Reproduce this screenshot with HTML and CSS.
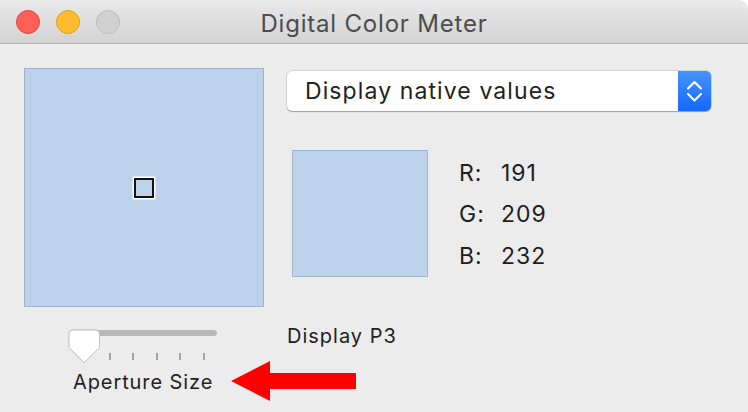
FILE: index.html
```html
<!DOCTYPE HTML>
<html>
  <head>
    <meta http-equiv="Content-Type" content="text/html; charset=utf-8" />
    <link rel="stylesheet" href="styles.css">
  </head>
  <body>
    <div class="window">
      <div class="titlebar">
        <div class="lights">
          <span class="light close"></span>
          <span class="light min"></span>
          <span class="light zoom"></span>
        </div>
        <div class="title">Digital Color Meter</div>
      </div>

      <div class="content">
        <div class="loupe"><span class="aperture"></span></div>

        <div class="right">
          <div class="popup">
            <span class="popup-label">Display native values</span>
            <span class="popup-arrows">
              <svg width="33" height="40" viewBox="0 0 33 40">
                <polyline points="10,17.5 16.5,11 23,17.5" fill="none" stroke="#fff" stroke-width="2.2" stroke-linecap="round" stroke-linejoin="round"/>
                <polyline points="10,23 16.5,29.5 23,23" fill="none" stroke="#fff" stroke-width="2.2" stroke-linecap="round" stroke-linejoin="round"/>
              </svg>
            </span>
          </div>
          <div class="reading">
            <div class="swatch"></div>
            <div class="values">
              <span class="lbl">R:</span><span>191</span>
              <span class="lbl">G:</span><span>209</span>
              <span class="lbl">B:</span><span>232</span>
            </div>
          </div>
        </div>

        <div class="aperture-ctl">
          <div class="slider">
            <div class="track"></div>
            <div class="ticks">
              <span></span><span></span><span></span><span></span><span></span><span></span>
            </div>
            <svg class="knob" width="33" height="35" viewBox="0 0 33 35">
              <path d="M4.5,1 H28 Q31.5,1 31.5,4.5 V18.5 L16.2,33.5 L1,18.5 V4.5 Q1,1 4.5,1 Z" fill="#fff" stroke="#c2c2c2" stroke-width="1"/>
            </svg>
          </div>
          <div class="ctl-label">Aperture Size</div>
        </div>

        <div class="profile">Display P3</div>
      </div>

      <svg class="arrow" width="132" height="46" viewBox="0 0 132 46">
        <polygon points="3,23 42,3 42,15 128,15 128,31 42,31 42,43" fill="#ff0000"/>
      </svg>
    </div>
  </body>
</html>
```

FILE: styles.css
```css
body      { margin: 0; background: #fff; font-family: Inter, "Liberation Sans", Arial, sans-serif; }
.window   { position: relative; width: 748px; height: 412px; background: #ececec; border-radius: 0 10px 0 0; overflow: hidden; }

.titlebar { position: relative; height: 43px; border-bottom: 1px solid #b3b3b3; background: linear-gradient(#e9e9e9, #d3d3d3); display: flex; align-items: center; justify-content: center; }
.lights   { position: absolute; left: 16px; top: 10px; display: flex; gap: 16px; }
.light    { width: 22px; height: 22px; border-radius: 50%; border: 1px solid; }
.close    { background: #fe5f57; border-color: #e1463f; }
.min      { background: #febc2e; border-color: #de9f22; }
.zoom     { background: #d1d1d1; border-color: #bcbcbc; }
.title    { font-size: 24px; color: #4c4c4c; padding-top: 3px; letter-spacing: 0.8px; }

.content  { display: grid; grid-template-columns: 240px 424px; column-gap: 23px; padding: 24px 0 0 24px; }

.loupe    { box-sizing: border-box; width: 240px; height: 239px; background: #bcd2ea; border: 1px solid #9eb3cb; display: flex; align-items: center; justify-content: center; }
.aperture { width: 16px; height: 16px; border: 2px solid #111; box-shadow: 0 0 0 1.5px #fff; }

.right    { padding-top: 3px; }
.popup    { height: 40px; display: flex; background: #fff; border-radius: 5px; box-shadow: 0 0 0 0.5px rgba(0,0,0,0.2), 0 1px 1px rgba(0,0,0,0.25); }
.popup-label  { flex: 1; font-size: 23px; color: #222; line-height: 40px; padding-left: 18px; letter-spacing: 1.1px; }
.popup-arrows { width: 33px; height: 40px; border-radius: 0 5px 5px 0; background: linear-gradient(#4594fd, #1467fd); }
.popup-arrows svg { display: block; }

.reading  { display: flex; margin-top: 39px; padding-left: 5px; gap: 31px; }
.swatch   { box-sizing: border-box; width: 136px; height: 127px; background: #bcd2ea; border: 1px solid #9fb6cf; }
.values   { display: grid; grid-template-columns: 42px auto; font-size: 23px; line-height: 41px; color: #1e1e1e; margin-top: 3px; letter-spacing: 1px; }

.aperture-ctl { padding-top: 15px; }
.slider   { position: relative; width: 147px; padding-left: 46px; height: 38px; }
.track    { height: 6px; margin-top: 8px; border-radius: 3px; background: #b9b9b9; }
.ticks    { display: flex; justify-content: space-between; margin-top: 17px; padding: 0 12px 0 15px; }
.ticks span { width: 2px; height: 7px; background: #a3a3a3; }
.knob     { position: absolute; left: 44px; top: -1px; filter: drop-shadow(0 0.5px 0.5px rgba(0,0,0,0.15)); }
.ctl-label { font-size: 20px; color: #222; margin: 2px 0 0 49px; letter-spacing: 0.9px; }

.profile  { font-size: 20px; color: #222; padding-top: 17px; letter-spacing: 1px; }

.arrow    { position: absolute; left: 228px; top: 358px; }
```
